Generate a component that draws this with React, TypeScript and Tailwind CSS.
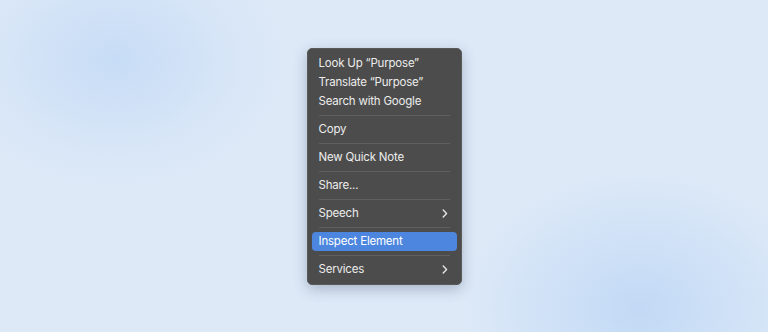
import { Fragment } from "react";

type Item = { label: string; submenu?: boolean; active?: boolean };

const groups: Item[][] = [
  [{ label: "Look Up “Purpose”" }, { label: "Translate “Purpose”" }, { label: "Search with Google" }],
  [{ label: "Copy" }],
  [{ label: "New Quick Note" }],
  [{ label: "Share..." }],
  [{ label: "Speech", submenu: true }],
  [{ label: "Inspect Element", active: true }],
  [{ label: "Services", submenu: true }],
];

const Chevron = () => (
  <svg width="6" height="9" viewBox="0 0 6 9" fill="none">
    <path d="M1.2 1 L4.6 4.5 L1.2 8" stroke="#e6e6e6" strokeWidth="1.4" strokeLinecap="round" strokeLinejoin="round" />
  </svg>
);

function MenuRow({ item }: { item: Item }) {
  return (
    <div
      className={
        item.active
          ? "mx-[4px] h-[19px] pl-[7px] pr-[9px] flex items-center justify-between rounded-[4px] bg-[#4d86de] text-white"
          : "mx-[4px] h-[19px] pl-[7px] pr-[9px] flex items-center justify-between text-[#ececec]"
      }
    >
      <span>{item.label}</span>
      {item.submenu && <Chevron />}
    </div>
  );
}

export default function App() {
  return (
    <div className="relative w-[768px] h-[332px] overflow-hidden bg-[#dde9f7] flex items-start justify-center">
      {/* soft background blobs */}
      <div className="absolute left-[-60px] top-[-70px] w-[350px] h-[260px] rounded-full bg-[radial-gradient(closest-side,#c7dcf6,#d6e5f7_60%,transparent)]" />
      <div className="absolute left-[460px] top-[170px] w-[360px] h-[280px] rounded-full bg-[radial-gradient(closest-side,#c2d9f5,#d2e3f7_60%,transparent)]" />

      <div
        className="relative mt-[48px] w-[155px] py-[5px] rounded-[5px] bg-[#4c4c4c] border border-[#5a5a5a] shadow-[0_4px_14px_rgba(40,60,90,0.3)] text-[11.5px] tracking-[-0.2px] leading-none"
        style={{ fontFamily: "Inter, 'Liberation Sans', sans-serif" }}
      >
        {groups.map((g, gi) => (
          <Fragment key={gi}>
            {gi > 0 && (
              <div className="h-[9px] flex items-center px-[11px]">
                <div className="h-px w-full bg-[#606060]" />
              </div>
            )}
            {g.map((item) => (
              <MenuRow key={item.label} item={item} />
            ))}
          </Fragment>
        ))}
      </div>
    </div>
  );
}
